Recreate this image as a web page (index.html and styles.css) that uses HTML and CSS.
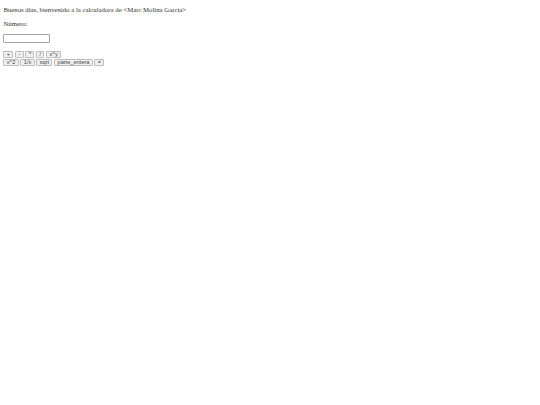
FILE: index.html
```html
<!DOCTYPE html>
<html>
<head>
<meta charset="utf-8">
<link rel="stylesheet" href="styles.css">
</head>
<body>
<p class="greet">Buenos días, bienvenido a la calculadora de &lt;Marc Molina Garcia&gt;</p>
<p class="label">Número:</p>
<input class="num" type="text">
<div class="ops">
<div class="row"><button class="btn">+</button><button class="btn">-</button><button class="btn">*</button><button class="btn">/</button><button class="btn">x^y</button></div>
<div class="row"><button class="btn">x^2</button><button class="btn">1/x</button><button class="btn">sqrt</button><button class="btn">parte_entera</button><button class="btn">=</button></div>
</div>
</body>
</html>
```
FILE: styles.css
```css
html { background: #fff; }
body {
  margin: 0;
  padding: 3.4px 3.4px 0;
  font-family: "Liberation Serif", "Times New Roman", serif;
  font-size: 6.75px;
  line-height: 7.5px;
  color: #333;
}
p { margin: 6.5px 0; }
.greet { margin-top: 2.6px; }
.num {
  display: block;
  box-sizing: border-box;
  width: 47px;
  height: 9px;
  margin: 0;
  padding: 0 1px;
  border: 1px solid #a5a5a5;
  border-radius: 1px;
  background: #fff;
  font-family: "Liberation Sans", Arial, sans-serif;
  font-size: 5.6px;
}
.ops {
  margin-top: 7.6px;
  display: flex;
  flex-direction: column;
  gap: 1.2px;
}
.row {
  display: flex;
  gap: 1.7px;
}
.btn {
  box-sizing: border-box;
  height: 7px;
  margin: 0;
  padding: 0 2.4px;
  border: 1px solid #bdbdbd;
  border-radius: 1px;
  background: #f0f0f0;
  color: #444;
  font-family: "Liberation Sans", Arial, sans-serif;
  font-size: 5.6px;
  line-height: 5px;
}
```
